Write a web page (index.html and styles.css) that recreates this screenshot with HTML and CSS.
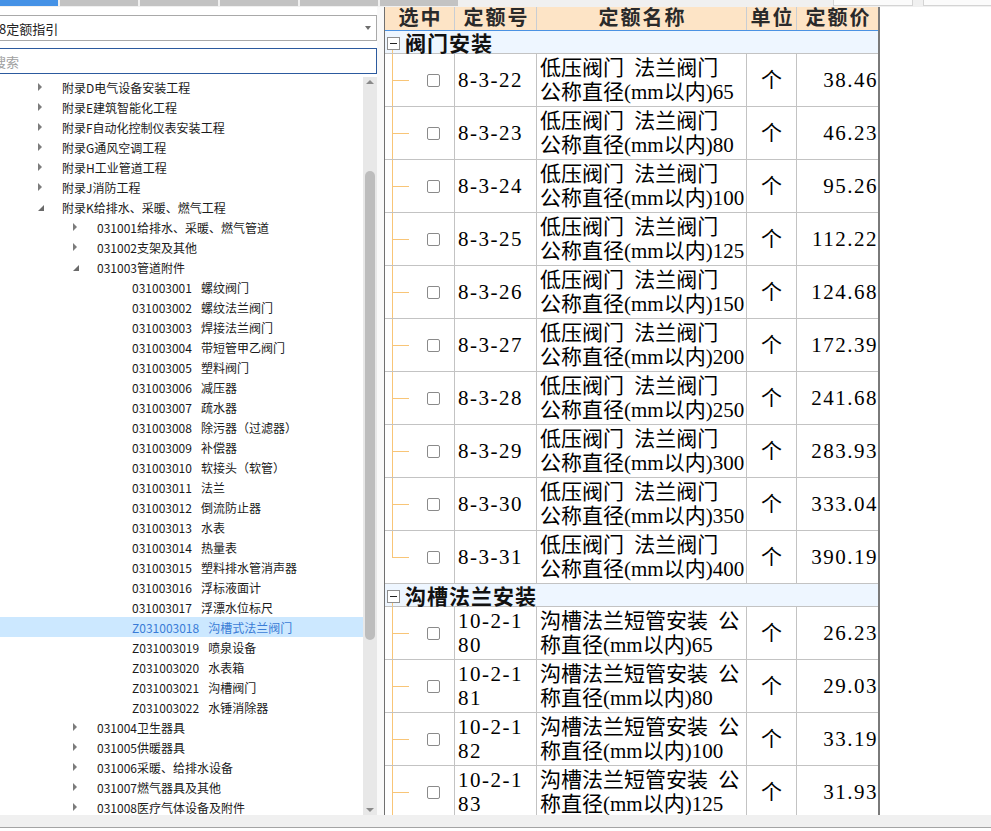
FILE: index.html
```html
<!DOCTYPE html>
<html lang="zh-CN">
<head>
<meta charset="utf-8">
<title>定额指引</title>
<link rel="stylesheet" href="styles.css">
</head>
<body>
<div class="topbar">
  <div class="tab active"></div>
  <div class="tab"></div>
  <div class="tab"></div>
  <div class="tab"></div>
  <div class="tab"></div>
  <div class="tab"></div>
  <div class="topbox b1"></div>
  <div class="topbox b2"></div>
</div>
<div class="main">
  <aside class="left">
    <div class="select"><span>8定额指引</span><span class="caret"></span></div>
    <div class="search"><span>搜索</span></div>
    <div class="tree">
      <div class="tree-list">
        <div class="node l1"><i class="tri closed"></i><span>附录D电气设备安装工程</span></div>
        <div class="node l1"><i class="tri closed"></i><span>附录E建筑智能化工程</span></div>
        <div class="node l1"><i class="tri closed"></i><span>附录F自动化控制仪表安装工程</span></div>
        <div class="node l1"><i class="tri closed"></i><span>附录G通风空调工程</span></div>
        <div class="node l1"><i class="tri closed"></i><span>附录H工业管道工程</span></div>
        <div class="node l1"><i class="tri closed"></i><span>附录J消防工程</span></div>
        <div class="node l1"><i class="tri open"></i><span>附录K给排水、采暖、燃气工程</span></div>
        <div class="node l2"><i class="tri closed"></i><span>031001给排水、采暖、燃气管道</span></div>
        <div class="node l2"><i class="tri closed"></i><span>031002支架及其他</span></div>
        <div class="node l2"><i class="tri open"></i><span>031003管道附件</span></div>
        <div class="node l3"><span class="code">031003001</span><span class="name">螺纹阀门</span></div>
        <div class="node l3"><span class="code">031003002</span><span class="name">螺纹法兰阀门</span></div>
        <div class="node l3"><span class="code">031003003</span><span class="name">焊接法兰阀门</span></div>
        <div class="node l3"><span class="code">031003004</span><span class="name">带短管甲乙阀门</span></div>
        <div class="node l3"><span class="code">031003005</span><span class="name">塑料阀门</span></div>
        <div class="node l3"><span class="code">031003006</span><span class="name">减压器</span></div>
        <div class="node l3"><span class="code">031003007</span><span class="name">疏水器</span></div>
        <div class="node l3"><span class="code">031003008</span><span class="name">除污器（过滤器）</span></div>
        <div class="node l3"><span class="code">031003009</span><span class="name">补偿器</span></div>
        <div class="node l3"><span class="code">031003010</span><span class="name">软接头（软管）</span></div>
        <div class="node l3"><span class="code">031003011</span><span class="name">法兰</span></div>
        <div class="node l3"><span class="code">031003012</span><span class="name">倒流防止器</span></div>
        <div class="node l3"><span class="code">031003013</span><span class="name">水表</span></div>
        <div class="node l3"><span class="code">031003014</span><span class="name">热量表</span></div>
        <div class="node l3"><span class="code">031003015</span><span class="name">塑料排水管消声器</span></div>
        <div class="node l3"><span class="code">031003016</span><span class="name">浮标液面计</span></div>
        <div class="node l3"><span class="code">031003017</span><span class="name">浮漂水位标尺</span></div>
        <div class="node l3 sel"><span class="code">Z031003018</span><span class="name">沟槽式法兰阀门</span></div>
        <div class="node l3"><span class="code">Z031003019</span><span class="name">喷泉设备</span></div>
        <div class="node l3"><span class="code">Z031003020</span><span class="name">水表箱</span></div>
        <div class="node l3"><span class="code">Z031003021</span><span class="name">沟槽阀门</span></div>
        <div class="node l3"><span class="code">Z031003022</span><span class="name">水锤消除器</span></div>
        <div class="node l2"><i class="tri closed"></i><span>031004卫生器具</span></div>
        <div class="node l2"><i class="tri closed"></i><span>031005供暖器具</span></div>
        <div class="node l2"><i class="tri closed"></i><span>031006采暖、给排水设备</span></div>
        <div class="node l2"><i class="tri closed"></i><span>031007燃气器具及其他</span></div>
        <div class="node l2"><i class="tri closed"></i><span>031008医疗气体设备及附件</span></div>
      </div>
      <div class="vscroll">
        <div class="sb-arrow up"></div>
        <div class="sb-track"><div class="sb-thumb" style="margin-top:82px;height:469px"></div></div>
        <div class="sb-arrow down"></div>
      </div>
    </div>
  </aside>
  <div class="gap"></div>
  <section class="grid">
    <div class="head">
      <div>选中</div><div>定额号</div><div>定额名称</div><div>单位</div><div>定额价</div>
    </div>
    <div class="group first"><span class="minus"></span><span class="group-label">阀门安装</span></div>
    <div class="row"><div class="c-sel"><span class="chk"></span></div><div class="c-code"><span>8-3-22</span></div><div class="c-name"><span>低压阀门 法兰阀门<br>公称直径(mm以内)65</span></div><div class="c-unit"><span>个</span></div><div class="c-price"><span>38.46</span></div></div>
    <div class="row"><div class="c-sel"><span class="chk"></span></div><div class="c-code"><span>8-3-23</span></div><div class="c-name"><span>低压阀门 法兰阀门<br>公称直径(mm以内)80</span></div><div class="c-unit"><span>个</span></div><div class="c-price"><span>46.23</span></div></div>
    <div class="row"><div class="c-sel"><span class="chk"></span></div><div class="c-code"><span>8-3-24</span></div><div class="c-name"><span>低压阀门 法兰阀门<br>公称直径(mm以内)100</span></div><div class="c-unit"><span>个</span></div><div class="c-price"><span>95.26</span></div></div>
    <div class="row"><div class="c-sel"><span class="chk"></span></div><div class="c-code"><span>8-3-25</span></div><div class="c-name"><span>低压阀门 法兰阀门<br>公称直径(mm以内)125</span></div><div class="c-unit"><span>个</span></div><div class="c-price"><span>112.22</span></div></div>
    <div class="row"><div class="c-sel"><span class="chk"></span></div><div class="c-code"><span>8-3-26</span></div><div class="c-name"><span>低压阀门 法兰阀门<br>公称直径(mm以内)150</span></div><div class="c-unit"><span>个</span></div><div class="c-price"><span>124.68</span></div></div>
    <div class="row"><div class="c-sel"><span class="chk"></span></div><div class="c-code"><span>8-3-27</span></div><div class="c-name"><span>低压阀门 法兰阀门<br>公称直径(mm以内)200</span></div><div class="c-unit"><span>个</span></div><div class="c-price"><span>172.39</span></div></div>
    <div class="row"><div class="c-sel"><span class="chk"></span></div><div class="c-code"><span>8-3-28</span></div><div class="c-name"><span>低压阀门 法兰阀门<br>公称直径(mm以内)250</span></div><div class="c-unit"><span>个</span></div><div class="c-price"><span>241.68</span></div></div>
    <div class="row"><div class="c-sel"><span class="chk"></span></div><div class="c-code"><span>8-3-29</span></div><div class="c-name"><span>低压阀门 法兰阀门<br>公称直径(mm以内)300</span></div><div class="c-unit"><span>个</span></div><div class="c-price"><span>283.93</span></div></div>
    <div class="row"><div class="c-sel"><span class="chk"></span></div><div class="c-code"><span>8-3-30</span></div><div class="c-name"><span>低压阀门 法兰阀门<br>公称直径(mm以内)350</span></div><div class="c-unit"><span>个</span></div><div class="c-price"><span>333.04</span></div></div>
    <div class="row last"><div class="c-sel"><span class="chk"></span></div><div class="c-code"><span>8-3-31</span></div><div class="c-name"><span>低压阀门 法兰阀门<br>公称直径(mm以内)400</span></div><div class="c-unit"><span>个</span></div><div class="c-price"><span>390.19</span></div></div>
    <div class="group"><span class="minus"></span><span class="group-label">沟槽法兰安装</span></div>
    <div class="row"><div class="c-sel"><span class="chk"></span></div><div class="c-code"><span>10-2-180</span></div><div class="c-name"><span>沟槽法兰短管安装 公称直径(mm以内)65</span></div><div class="c-unit"><span>个</span></div><div class="c-price"><span>26.23</span></div></div>
    <div class="row"><div class="c-sel"><span class="chk"></span></div><div class="c-code"><span>10-2-181</span></div><div class="c-name"><span>沟槽法兰短管安装 公称直径(mm以内)80</span></div><div class="c-unit"><span>个</span></div><div class="c-price"><span>29.03</span></div></div>
    <div class="row"><div class="c-sel"><span class="chk"></span></div><div class="c-code"><span>10-2-182</span></div><div class="c-name"><span>沟槽法兰短管安装 公称直径(mm以内)100</span></div><div class="c-unit"><span>个</span></div><div class="c-price"><span>33.19</span></div></div>
    <div class="row"><div class="c-sel"><span class="chk"></span></div><div class="c-code"><span>10-2-183</span></div><div class="c-name"><span>沟槽法兰短管安装 公称直径(mm以内)125</span></div><div class="c-unit"><span>个</span></div><div class="c-price"><span>31.93</span></div></div>
  </section>
  <div class="rest"></div>
</div>
<div class="bottombar"></div>
</body>
</html>
```
FILE: styles.css
```css
* { box-sizing: border-box; }
html, body { margin: 0; padding: 0; }
body {
  width: 991px;
  height: 831px;
  overflow: hidden;
  background: #ffffff;
  font-family: "Noto Sans CJK SC", sans-serif;
  color: #1e1e1e;
}

/* top tab strip */
.topbar { display: flex; height: 7px; background: #f0f0f0; overflow: hidden; }
.tab { width: 78px; height: 6px; margin-right: 2px; background: #c3c3c3; flex: none; }
.tab.active { width: 58px; background: #4592e6; }
.topbox { height: 6px; flex: none; background: #fbfbfb; border: 1px solid #d4d4d4; border-top: none; }
.topbox.b1 { width: 80px; margin-left: auto; margin-right: 10px; }
.topbox.b2 { width: 70px; margin-right: -2px; }

/* main */
.main { display: flex; height: 808px; }

/* left panel */
.left {
  width: 377px;
  flex: none;
  padding-top: 8px;
  display: flex;
  flex-direction: column;
  overflow: hidden;
  background: #ffffff;
}
.select {
  height: 26px;
  margin-left: -20px;
  border: 1px solid #a9a9a9;
  display: flex;
  align-items: center;
  padding-left: 18px;
  padding-right: 5px;
  font-size: 13px;
  color: #222;
  flex: none;
}
.caret {
  margin-left: auto;
  border-top: 4px solid #6d6d6d;
  border-left: 3px solid transparent;
  border-right: 3px solid transparent;
}
.search {
  height: 26px;
  margin-top: 7px;
  margin-left: -20px;
  border: 1px solid #2c5a9e;
  padding-left: 12px;
  display: flex;
  align-items: center;
  font-size: 13px;
  color: #a0a0a0;
  flex: none;
}
.tree { margin-top: 3px; height: 738px; display: flex; flex: none; }
.tree-list { flex: 1; overflow: hidden; }
.node {
  height: 20px;
  display: flex;
  align-items: center;
  font-size: 12px;
  white-space: nowrap;
  color: #1a1a1a;
}
.l1 { padding-left: 38px; }
.l2 { padding-left: 73px; }
.l3 { padding-left: 132px; }
.tri { width: 24px; height: 100%; flex: none; display: flex; align-items: center; }
.tri.closed::before {
  content: "";
  border-left: 4px solid #7c7c7c;
  border-top: 4px solid transparent;
  border-bottom: 4px solid transparent;
}
.tri.open::before {
  content: "";
  margin-top: 2px;
  border-bottom: 6px solid #6a6a6a;
  border-left: 6px solid transparent;
}
.name { margin-left: 9px; }
.node.sel { background: #cce8ff; color: #3a7cd6; }

.vscroll { width: 14px; flex: none; background: #e8e8e8; display: flex; flex-direction: column; }
.sb-arrow { height: 12px; flex: none; display: flex; justify-content: center; align-items: center; }
.sb-arrow.up { align-items: flex-start; padding-top: 3px; }
.sb-arrow.up::before {
  content: "";
  border-bottom: 4px solid #8a8a8a;
  border-left: 4px solid transparent;
  border-right: 4px solid transparent;
}
.sb-arrow.down { align-items: flex-end; padding-bottom: 3px; }
.sb-arrow.down::before {
  content: "";
  border-top: 4px solid #8a8a8a;
  border-left: 4px solid transparent;
  border-right: 4px solid transparent;
}
.sb-track { flex: 1; display: flex; flex-direction: column; align-items: center; }
.sb-thumb { width: 10px; flex: none; background: #bdbdbd; border-radius: 5px; }

.gap { width: 7px; flex: none; background: #f9f9f9; }

/* grid */
.grid {
  width: 496px;
  flex: none;
  height: 808px;
  overflow: hidden;
  border-left: 1px solid #707070;
  border-right: 2px solid #7a7a7a;
  background: #ffffff;
  font-family: "Liberation Serif", "Noto Sans CJK SC", serif;
  color: #000;
}
.head, .row { display: grid; grid-template-columns: 70px 82px 210px 50px 81px; }
.head { height: 24px; background: #fde4c6; border-bottom: 1px solid #4b92e3; }
.head > div {
  border-right: 1px solid #c8cdd4;
  text-align: center;
  padding-left: 2px;
  font-weight: bold;
  font-size: 20px;
  letter-spacing: 2px;
  line-height: 23px;
  color: #2a2a2a;
  white-space: nowrap;
  overflow: hidden;
}
.head > div:last-child { border-right: none; }

.group {
  height: 23px;
  display: flex;
  align-items: center;
  padding-left: 2px;
  background-color: #eef6ff;
  border-bottom: 1px solid #c3c3c3;
  background-image: linear-gradient(#f8c577, #f8c577);
  background-repeat: no-repeat;
  background-position: 7px 100%;
  background-size: 1px 4px;
}
.minus {
  width: 13px;
  height: 13px;
  margin-top: 3px;
  flex: none;
  border: 1px solid #8e8e8e;
  background: #fff;
  display: flex;
  align-items: center;
  justify-content: center;
}
.minus::before { content: ""; width: 7px; height: 1px; background: #222; }
.group-label {
  margin-left: 5px;
  font-family: "Noto Sans CJK SC", sans-serif;
  font-weight: bold;
  font-size: 21px;
  letter-spacing: 1px;
  line-height: 22px;
  color: #111;
}

.row { height: 53px; border-bottom: 1px solid #c3c3c3; background: #fff; }
.row > div {
  border-right: 1px solid #c3c3c3;
  display: flex;
  align-items: center;
  font-size: 21px;
  line-height: 24px;
  overflow: hidden;
}
.row > div:last-child { border-right: none; }
.c-sel {
  padding-left: 42px;
  background-image: linear-gradient(#f8c577, #f8c577), linear-gradient(#f8c577, #f8c577);
  background-repeat: no-repeat, no-repeat;
  background-position: 7px 0, 7px 50%;
  background-size: 1px 100%, 17px 1px;
}
.row.last .c-sel { background-size: 1px 50%, 17px 1px; }
.chk {
  width: 13px;
  height: 13px;
  flex: none;
  border: 1px solid #8a8a8a;
  border-radius: 2px;
  background: #fff;
}
.c-code { padding: 0 6px 0 3px; letter-spacing: 1.5px; word-break: break-all; }
.c-name { padding-left: 3px; word-spacing: 5px; }
.c-unit { justify-content: center; }
.c-price { justify-content: flex-end; letter-spacing: 1.5px; }

.rest { flex: 1; background: #ffffff; }

.bottombar { height: 13px; background: #f0f0f0; border-bottom: 1px solid #a4a4a4; }
```
